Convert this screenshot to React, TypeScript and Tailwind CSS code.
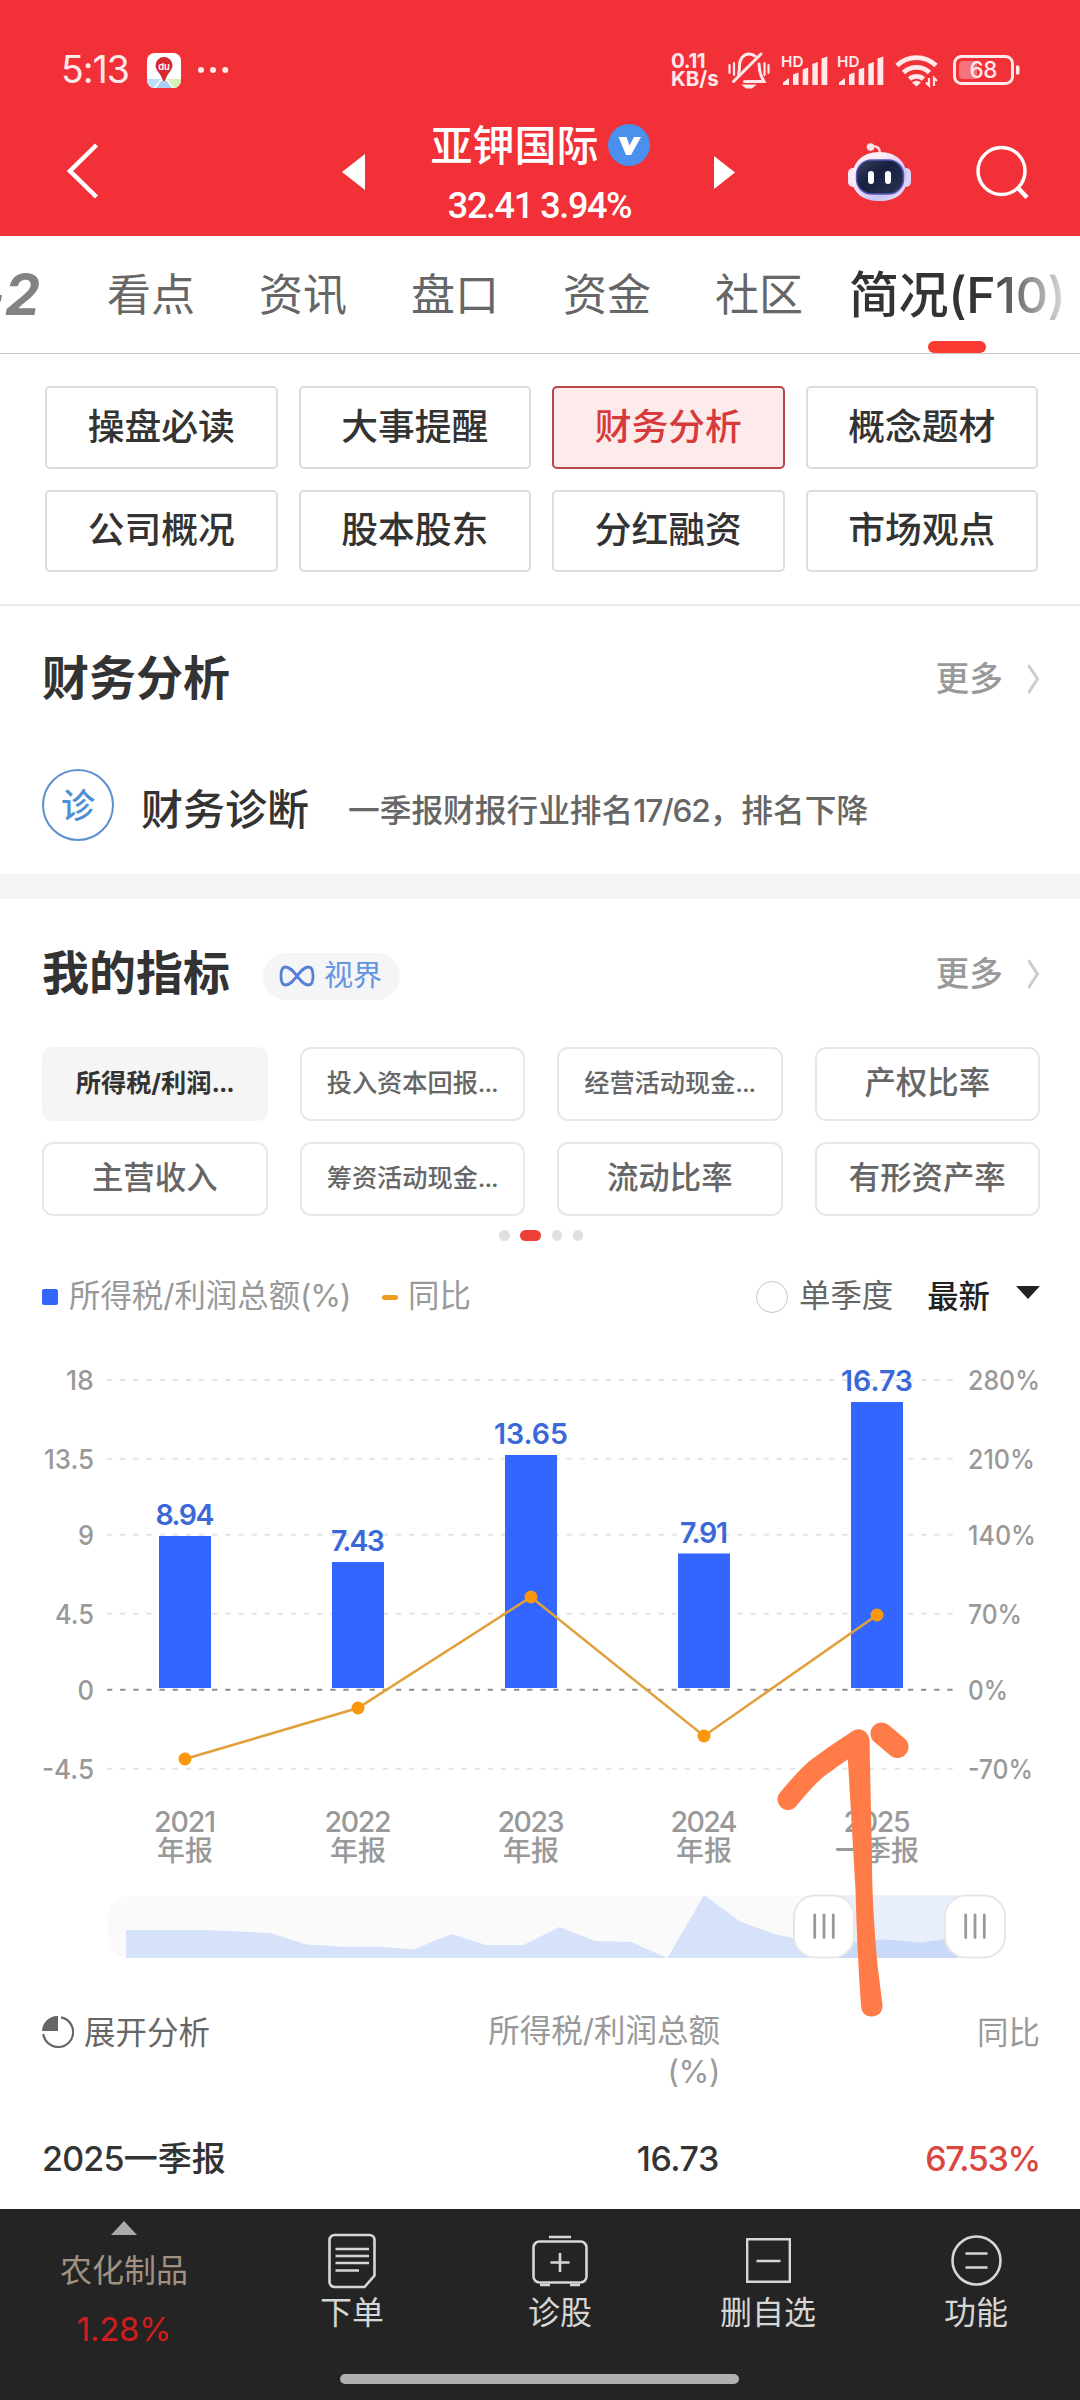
import clsx from 'clsx'

const FONT = "font-['Inter','Noto_Sans_CJK_SC',sans-serif]"

const TABS = ['看点', '资讯', '盘口', '资金', '社区']

const SECTIONS = ['操盘必读', '大事提醒', '财务分析', '概念题材', '公司概况', '股本股东', '分红融资', '市场观点']

const METRICS = [
  { label: '所得税/利润', cut: true, active: true },
  { label: '投入资本回报', cut: true },
  { label: '经营活动现金', cut: true },
  { label: '产权比率' },
  { label: '主营收入' },
  { label: '筹资活动现金', cut: true },
  { label: '流动比率' },
  { label: '有形资产率' },
]

const BARS = [
  { year: '2021', period: '年报', value: '8.94', x: 185, top: 196, yoy: 419, w: 57, yw: 61 },
  { year: '2022', period: '年报', value: '7.43', x: 358, top: 222, yoy: 368, w: 52, yw: 66 },
  { year: '2023', period: '年报', value: '13.65', x: 531, top: 115, yoy: 257, w: 72, yw: 66 },
  { year: '2024', period: '年报', value: '7.91', x: 704, top: 213.5, yoy: 396, w: 46, yw: 66 },
  { year: '2025', period: '一季报', value: '16.73', x: 877, top: 62, yoy: 275, w: 70, yw: 66 },
]

const AXIS = [
  { y: 40, left: '18', right: '280%', lw: 28, rw: 72 },
  { y: 118.7, left: '13.5', right: '210%', lw: 50, rw: 67 },
  { y: 194.7, left: '9', right: '140%', lw: 16, rw: 68 },
  { y: 273.7, left: '4.5', right: '70%', lw: 39, rw: 54 },
  { y: 349.7, left: '0', right: '0%', lw: 16.5, rw: 40 },
  { y: 428.7, left: '-4.5', right: '-70%', lw: 52, rw: 65 },
]

function Signal() {
  return (
    <svg width="48" height="36" viewBox="0 0 48 36" fill="#ffe9ea">
      <text x="0" y="15" fontSize="15" fontWeight="600" textLength="22.500" lengthAdjust="spacingAndGlyphs">HD</text>
      <path d="M2 33v-2.500l6-4.500v7zM12 33V22.500l5.500-2V33zM21.700 33V17.500l5.500-2V33zM31.300 33V12l5.500-2V33zM40.500 33V6.500l5.800-2V33z" />
    </svg>
  )
}

function StatusBar() {
  return (
    <div className="flex h-[116px] items-center pl-[61px] pt-[24px] text-[#ffe9ea]">
      <span className="w-[68px] whitespace-nowrap text-[37.500px] leading-[40px] tracking-[-1px]">5:13</span>
      <svg className="ml-[18px]" width="34" height="35" viewBox="0 0 34 35">
        <clipPath id="app"><rect width="34" height="35" rx="7.500" /></clipPath>
        <g clipPath="url(#app)">
          <rect width="34" height="35" fill="#fff" />
          <path d="M0 26h14l-7 9H0z" fill="#b9e0f7" />
          <path d="M20 26h14v9h-7z" fill="#d6efb5" />
          <path d="M14 28h6l5 7H9z" fill="#a9cdf3" />
          <path d="M17 4a8.500 8.500 0 0 1 8.500 8.500c0 5-5.500 8-7.500 15.500h-2C14 20.500 8.500 17.500 8.500 12.500A8.500 8.500 0 0 1 17 4z" fill="#d7282f" />
          <text x="17" y="16.500" fontSize="9.500" fontWeight="600" textAnchor="middle" fill="#fff">du</text>
        </g>
      </svg>
      <svg className="ml-[16px]" width="32" height="8" viewBox="0 0 32 8" fill="#ffe9ea">
        <circle cx="4" cy="4" r="3" /><circle cx="16" cy="4" r="3" /><circle cx="28.300" cy="4" r="3" />
      </svg>
      <div className="ml-[442px] w-[49px] text-[20.500px] leading-[18px] font-bold">
        <div className="tracking-[-0.400px]">0.11</div>
        <div className="whitespace-nowrap">KB/s</div>
      </div>
      <svg className="ml-[8px]" width="42" height="38" viewBox="0 0 42 38" fill="none" stroke="#ffe9ea" strokeWidth="3" strokeLinecap="round">
        <path d="M10.500 23c1-2.500 1-4.500 1-8 0-7 4-12 9.500-12 2.500 0 4.500.8 6 2.200M31 13c.5 5 .5 9 2.500 12.500l2.500 5H16.500" />
        <path d="M5.500 30.500 33 3" />
        <path d="M16 34.500h10l-2.500 2h-5z" strokeWidth="2" fill="#ffe9ea" />
        <path d="M1.500 14v8M6 12v12M36.500 12v12M40.500 14v8" strokeWidth="2.200" />
      </svg>
      <span className="ml-[11px]"><Signal /></span>
      <span className="ml-[8px]"><Signal /></span>
      <svg className="ml-[10px]" width="44" height="36" viewBox="0 0 44 36" fill="none" stroke="#ffe9ea" strokeWidth="4.800">
        <path d="M2 13.500a28 28 0 0 1 39 0M8.500 20.500a19 19 0 0 1 26 0M14.500 27a10.500 10.500 0 0 1 14 0" />
        <path d="M17 30.500a7 7 0 0 1 9 0L21.500 34.500z" fill="#ffe9ea" stroke="none" />
        <path d="M34 26v7.500l-3-3M39 34v-8l3 3" strokeWidth="2.200" />
      </svg>
      <svg className="ml-[14px]" width="68" height="30" viewBox="0 0 68 30">
        <rect x="1.500" y="1.500" width="58" height="27" rx="7" fill="none" stroke="#ffe9ea" strokeWidth="3" />
        <path d="M10 6h14v18H10a4 4 0 0 1-4-4V10a4 4 0 0 1 4-4z" fill="#f5737a" />
        <path d="M63 10.500h2a1.500 1.500 0 0 1 1.500 1.500v6a1.500 1.500 0 0 1-1.500 1.500h-2z" fill="#ffe9ea" />
        <text x="30.500" y="23" fontSize="22.500" fontWeight="500" textAnchor="middle" textLength="28" fill="#ffe9ea">68</text>
      </svg>
    </div>
  )
}

function Robot() {
  return (
    <svg className="ml-[113px]" width="63" height="60" viewBox="0 0 63 60">
      <defs>
        <linearGradient id="shell" x1="0" y1="0" x2="1" y2="1">
          <stop offset="0.300" stopColor="#fdeef6" />
          <stop offset="0.700" stopColor="#c9c3f5" />
          <stop offset="1" stopColor="#f3e6fb" />
        </linearGradient>
        <linearGradient id="face" x1="0" y1="0" x2="1" y2="1">
          <stop offset="0" stopColor="#3b4560" />
          <stop offset="0.400" stopColor="#18203f" />
          <stop offset="1" stopColor="#2c3352" />
        </linearGradient>
      </defs>
      <path d="M23 4.500c7-1 9 2 9 7" fill="none" stroke="#fbd9e4" strokeWidth="2.500" />
      <circle cx="22.500" cy="5" r="3.800" fill="#fbe3ea" />
      <rect x="0" y="26" width="10" height="19" rx="5" fill="#f6e6f5" />
      <rect x="53" y="26" width="10" height="19" rx="5" fill="#ddd3f8" />
      <path d="M31.500 10C50 10 59 22 59 36 59 51 48 59 31.500 59S4 51 4 36C4 22 13 10 31.500 10z" fill="url(#shell)" />
      <rect x="8.500" y="18" width="47" height="34" rx="15" fill="url(#face)" stroke="#5a56b8" strokeWidth="1.500" />
      <rect x="20" y="29" width="6" height="13" rx="3" fill="#fff" />
      <rect x="37" y="29" width="6" height="13" rx="3" fill="#fff" />
    </svg>
  )
}

function Header() {
  return (
    <header className="h-[236px] bg-[#f23037] text-white">
      <StatusBar />
      <div className="flex h-[112px] items-center pl-[66px]">
        <svg width="33" height="58" viewBox="0 0 33 58" fill="none" stroke="#fff" strokeWidth="4.500">
          <path d="M30.500 2 4 28 30.500 54" />
        </svg>
        <svg className="ml-[243px]" width="23" height="36" viewBox="0 0 23 36" fill="#fff"><path d="M23 0v36L0 18z" /></svg>
        <div className="h-[120px] w-[349px] self-start">
          <div className="flex h-[58px] items-center justify-center gap-[9px] pl-[1px]">
            <span className="pt-[1px] text-[42px] leading-[58px] font-medium">亚钾国际</span>
            <svg width="42" height="42" viewBox="0 0 42 42">
              <circle cx="21" cy="21" r="21" fill="#4a90ec" />
              <path d="M10.500 13h8l3 8.500 4.500-8.500h7L23 31h-5z" fill="#fff" />
            </svg>
          </div>
          <div className="pt-[1px] text-center font-['Roboto'] text-[36px] leading-[63px] font-medium tracking-[-1.400px]">32.41 3.94%</div>
        </div>
        <svg width="21" height="33" viewBox="0 0 21 33" fill="#fff"><path d="M0 0v33l21-16.500z" /></svg>
        <Robot />
        <svg className="ml-[65px]" width="53" height="54" viewBox="0 0 53 54" fill="none" stroke="#fff" strokeWidth="3.500">
          <circle cx="25.500" cy="26" r="23.500" />
          <path d="m42 43 9 9.500" strokeWidth="4.500" />
        </svg>
      </div>
    </header>
  )
}

function TabBar() {
  return (
    <nav className="relative flex h-[118px] items-center gap-[64px] overflow-hidden border-b border-[#c8c8c8] whitespace-nowrap">
      <span className="-ml-[23px] w-[66px] shrink-0 pr-[2px] text-right text-[56px] leading-[114px] font-bold tracking-[1px] text-[#828282] italic">-2</span>
      {TABS.map((t) => (
        <span key={t} className="w-[88px] shrink-0 text-[44px] leading-[114px] text-[#666]">{t}</span>
      ))}
      <span className="-ml-[18px] text-[50px] leading-[114px] font-medium tracking-[-0.400px] text-[#333]">简况(F10)</span>
      <div className="absolute top-0 right-0 h-[105px] w-[90px] bg-gradient-to-r from-white/0 to-white" />
      <div className="absolute top-[105px] left-[928px] h-[12px] w-[58px] rounded-full bg-[#fb3b32]" />
    </nav>
  )
}

function SectionNav() {
  return (
    <div className="grid h-[252px] grid-cols-4 content-start gap-x-[21px] gap-y-[21px] border-b-2 border-[#ebebeb] pt-[32px] pr-[42px] pl-[45px]">
      {SECTIONS.map((s) => (
        <div
          key={s}
          className={clsx(
            'flex h-[82.500px] items-center justify-center rounded-[5px] border-2 pb-[2px] text-[36.800px] font-medium',
            s === '财务分析' ? 'border-[#b94649] bg-[#fdeaea] text-[#d63a3a]' : 'border-[#dcdcdc] text-[#333]',
          )}
        >
          {s}
        </div>
      ))}
    </div>
  )
}

function More() {
  return (
    <div className="flex items-center gap-[25px] pt-[2px] text-[33.700px] leading-[48px] font-medium text-[#999]">
      更多
      <svg width="12" height="30" viewBox="0 0 12 30" fill="none" stroke="#ccc" strokeWidth="3" strokeLinecap="round">
        <path d="m1 2 8.500 13L1 28" />
      </svg>
    </div>
  )
}

function Diagnosis() {
  return (
    <section className="h-[268px] pr-[40px] pl-[42px]">
      <div className="flex h-[144px] items-center justify-between">
        <h2 className="text-[47px] leading-[60px] font-bold text-[#333]">财务分析</h2>
        <More />
      </div>
      <div className="mt-[19px] flex h-[72px] items-center">
        <div className="flex size-[72px] items-center justify-center rounded-full border-2 border-[#5a8fd0] text-[34px] font-medium text-[#4f8fd4]">诊</div>
        <div className="ml-[27px] pt-[10px] text-[42px] leading-[60px] font-medium text-[#333]">财务诊断</div>
        <div className="ml-[39px] pt-[11px] text-[31.700px] leading-[60px] font-medium text-[#666]">
          一季报财报行业排名<span className="tracking-[-1.200px]">17/62</span>，排名下降
        </div>
      </div>
    </section>
  )
}

function MetricPicker() {
  return (
    <section className="pr-[40px] pl-[42px]">
      <div className="flex h-[148px] items-center">
        <h2 className="text-[47px] leading-[60px] font-bold text-[#333]">我的指标</h2>
        <div className="mt-[6px] ml-[33px] flex h-[47px] w-[137px] items-center gap-[9px] rounded-full bg-[#f5f5f7] pl-[16px] text-[29px] text-[#6495e0]">
          <svg width="36" height="22" viewBox="0 0 36 22" fill="none" stroke="#5580d6" strokeWidth="2.800">
            <path d="M18 11c-4-5-7-9-11.500-9C3.500 2 2 5 2 11s1.500 9 4.500 9c4.500 0 7.500-4 11.500-9s7-9 11.500-9c3 0 4.500 3 4.500 9s-1.500 9-4.500 9c-4.500 0-7.500-4-11.500-9z" />
          </svg>
          视界
        </div>
        <div className="ml-auto"><More /></div>
      </div>
      <div className="grid grid-cols-4 gap-x-[32px] gap-y-[21.500px]">
        {METRICS.map((m) => (
          <div
            key={m.label}
            className={clsx(
              'flex h-[73.500px] items-center justify-center rounded-[11px] border-2 whitespace-nowrap',
              m.active ? 'border-[#f5f5f5] bg-[#f5f5f5] font-bold text-[#333]' : 'border-[#e8e8e8] font-medium text-[#666]',
              m.cut ? 'text-[25.200px]' : 'pb-[1px] text-[31.400px]',
            )}
          >
            {m.label}
            {m.cut && <span className="tracking-[-1px]">...</span>}
          </div>
        ))}
      </div>
      <div className="mt-[15px] flex h-[10px] items-center justify-center gap-[10.500px]">
        <i className="size-[10.500px] rounded-full bg-[#e0e0e0]" />
        <i className="h-[10.500px] w-[21px] rounded-full bg-[#ee3f37]" />
        <i className="size-[10.500px] rounded-full bg-[#e0e0e0]" />
        <i className="size-[10.500px] rounded-full bg-[#e0e0e0]" />
      </div>
    </section>
  )
}

function Legend() {
  return (
    <div className="mt-[30px] flex h-[53px] items-center pr-[40px] pl-[42px] text-[31.400px] text-[#999]">
      <i className="size-[16px] rounded-[2px] bg-[#3366ff]" />
      <span className="ml-[11px] w-[281px] whitespace-nowrap">所得税/利润总额<span className="tracking-[-1.200px]">(%)</span></span>
      <i className="ml-[32px] h-[5px] w-[16px] rounded-full bg-[#f09a1e]" />
      <span className="ml-[10px]">同比</span>
      <i className="ml-auto size-[32px] rounded-full border-[1.500px] border-[#c8c8c8]" />
      <span className="ml-[11px] text-[#666]">单季度</span>
      <span className="ml-[34px] pt-[1px] font-medium text-[#222]">最新</span>
      <svg className="mb-[9px] ml-[26px]" width="24" height="13" viewBox="0 0 24 13" fill="#222"><path d="M0 0h24L12 13z" /></svg>
    </div>
  )
}

function Chart() {
  return (
    <svg className="block" width="1080" height="540" viewBox="0 0 1080 540" fontSize="28" fontWeight="500">
      {AXIS.map((a) => (
        <g key={a.left} fill="#999">
          <path
            d={`M107 ${a.y}H953`}
            stroke={a.left === '0' ? '#8f8f8f' : '#e3e3e6'}
            strokeWidth="2"
            strokeDasharray="5.300 7.830"
          />
          <text x={94 - a.lw} y={a.y + 10} textLength={a.lw} fontSize="27.500" lengthAdjust="spacingAndGlyphs">{a.left}</text>
          <text x={968} y={a.y + 10} textLength={a.rw} fontSize="27.500" lengthAdjust="spacingAndGlyphs">{a.right}</text>
        </g>
      ))}
      {BARS.map((b) => (
        <g key={b.year} textAnchor="middle">
          <rect x={b.x - 26} y={b.top} width="52" height={348 - b.top} fill="#3366ff" />
          <text x={b.x} y={b.top - 10.7} fill="#3b68d8" fontSize="28.500" fontWeight="600" textLength={b.w + 2}>{b.value}</text>
          <text x={b.x} y="491.500" fill="#999" fontSize="28.500" textLength={b.yw + 1}>{b.year}</text>
          <text x={b.x} y="520.500" fill="#999" fontSize="28">{b.period}</text>
        </g>
      ))}
      <polyline points={BARS.map((b) => `${b.x},${b.yoy}`).join(' ')} fill="none" stroke="#e2a03c" strokeWidth="2.600" />
      {BARS.map((b) => (
        <circle key={b.year} cx={b.x} cy={b.yoy} r="6.500" fill="#fb970b" />
      ))}
    </svg>
  )
}

function RangeSlider() {
  return (
    <svg className="mt-[14px] ml-[108px] block" width="900" height="66" viewBox="108 1894 900 66">
      <rect x="108" y="1896" width="880" height="61.500" rx="20" fill="#fafafb" />
      <path
        d="M126 1958V1930H203L270 1933 306.500 1944.500 341 1946.500H379L414 1949.500 451 1934 486 1945H523.500L559.600 1927 595 1941 631 1942 667.500 1958 704 1895 740 1921.500 776 1934.500 793.500 1938 854 1942 884 1939.500 920.500 1942.500 944 1939.500 958 1958z"
        fill="#d6e2fa"
      />
      <rect x="824" y="1895" width="151" height="63" fill="#4080f0" fillOpacity="0.090" />
      {[824, 975].map((x) => (
        <g key={x}>
          <rect x={x - 30} y="1895.500" width="60" height="62" rx="21" fill="#fff" stroke="#e6e6e6" strokeWidth="2" />
          <path d={`M${x - 9.3} 1915v22.500M${x} 1915v22.500M${x + 9.3} 1915v22.500`} stroke="#999" strokeWidth="2.800" strokeLinecap="round" />
        </g>
      ))}
    </svg>
  )
}

function ReportTable() {
  return (
    <section className="pt-[50px] pr-[40px] pl-[42px]">
      <div className="flex h-[108px] items-start text-[31.500px] leading-[41px] text-[#999]">
        <div className="mt-[2px] flex items-center gap-[10px] text-[#666]">
          <svg width="32" height="32" viewBox="0 0 32 32" fill="none" stroke="#666" strokeWidth="2.200">
            <path d="M19 1.300A15 15 0 1 1 1.300 18" />
            <path d="M16 0v15H0A15.500 15.500 0 0 1 16 0z" fill="#666" stroke="none" />
          </svg>
          <span>展开分析</span>
        </div>
        <div className="ml-auto w-[260px] text-right whitespace-nowrap">
          所得税/利润总额
          <div className="tracking-[-0.500px]">(%)</div>
        </div>
        <div className="mt-[2px] w-[320px] text-right">同比</div>
      </div>
      <div className="mt-[16px] flex h-[50px] items-center text-[34px] font-medium text-[#333]">
        <div className="flex-1"><span className="tracking-[-0.800px]">2025</span>一季报</div>
        <div className="tracking-[-0.400px]">16.73</div>
        <div className="w-[321px] text-right tracking-[-1.300px] text-[#db463f]">67.53%</div>
      </div>
    </section>
  )
}

function BottomBar() {
  const item = 'flex w-[208px] flex-col items-center text-[32px] leading-[44px] text-[#d6d6d6]'
  return (
    <footer className="relative flex h-[191px] bg-[#242424] pt-[12px]">
      <div className="flex w-[248px] flex-col items-center">
        <svg width="26" height="14" viewBox="0 0 26 14" fill="#aaa"><path d="M13 0 26 14H0z" /></svg>
        <span className="mt-[14px] text-[32px] leading-[44px] text-[#a19182]">农化制品</span>
        <span className="mt-[14px] text-[33px] leading-[44px] tracking-[-0.300px] text-[#d31d1d]">1.28%</span>
      </div>
      <div className={item}>
        <svg className="mt-[12px] mb-[2px]" width="50" height="56" viewBox="0 0 50 56" fill="none" stroke="#d6d6d6" strokeWidth="2.600">
          <path d="M7.500 2h35a5 5 0 0 1 5 5v35.500L37.500 54h-30a5 5 0 0 1-5-5V7a5 5 0 0 1 5-5z" />
          <path d="M8.500 16H42M8.500 23H42M8.500 30H42M8.500 37.500H32" />
        </svg>
        下单
      </div>
      <div className={item}>
        <svg className="mt-[13px] mb-px" width="56" height="56" viewBox="0 0 56 56" fill="none" stroke="#d6d6d6" strokeWidth="2.600">
          <rect x="1.500" y="7.500" width="53" height="41" rx="6" />
          <path d="M17 3h22M28 19v19M18.500 28.500h19M8 51h10M38 51h10" />
        </svg>
        诊股
      </div>
      <div className={item}>
        <svg className="mt-[17px] mb-[8px]" width="45" height="45" viewBox="0 0 45 45" fill="none" stroke="#d6d6d6" strokeWidth="2.400">
          <path d="M1.200 1.200h42.600v42.600H1.200zM10.500 23h24" />
        </svg>
        删自选
      </div>
      <div className={item}>
        <svg className="mt-[14px] mb-[5px]" width="51" height="51" viewBox="0 0 51 51" fill="none" stroke="#d6d6d6" strokeWidth="2.600">
          <circle cx="25.500" cy="25.500" r="24" />
          <path d="M14.500 18.500h22M14.500 32.500h22" />
        </svg>
        功能
      </div>
      <div className="absolute top-[165px] left-[340px] h-[10px] w-[399px] rounded-full bg-[#b0b0b0]" />
    </footer>
  )
}

// Hand-drawn arrow laid over the chart
function Scribble() {
  return (
    <svg className="absolute top-[1710px] left-[760px]" width="170" height="320" viewBox="760 1710 170 320" fill="#ff7b47">
      <path d="M847 1742Q858 1722 869.500 1739L872 1860Q872 1905 877.500 1965L882.500 2005Q882.500 2016 871.500 2016.500Q861.500 2016 861 2006Q857 1950 855.500 1890L848 1762z" />
      <path d="M788 1799.500Q808 1775 819 1767Q835 1755 852 1744L858.500 1739.800" fill="none" stroke="#ff7b47" strokeWidth="21" strokeLinecap="round" strokeLinejoin="round" />
      <path d="m881.500 1733.500 16 13.500" stroke="#ff7b47" strokeWidth="22" strokeLinecap="round" />
    </svg>
  )
}

export default function App() {
  return (
    <div lang="zh-CN" className={clsx(FONT, 'relative flex h-[2400px] w-[1080px] flex-col overflow-hidden bg-white')}>
      <Header />
      <TabBar />
      <SectionNav />
      <Diagnosis />
      <div className="h-[25px] shrink-0 bg-[#f4f4f4]" />
      <MetricPicker />
      <Legend />
      <div className="mt-[16px]"><Chart /></div>
      <RangeSlider />
      <ReportTable />
      <div className="mt-auto shrink-0"><BottomBar /></div>
      <Scribble />
    </div>
  )
}
